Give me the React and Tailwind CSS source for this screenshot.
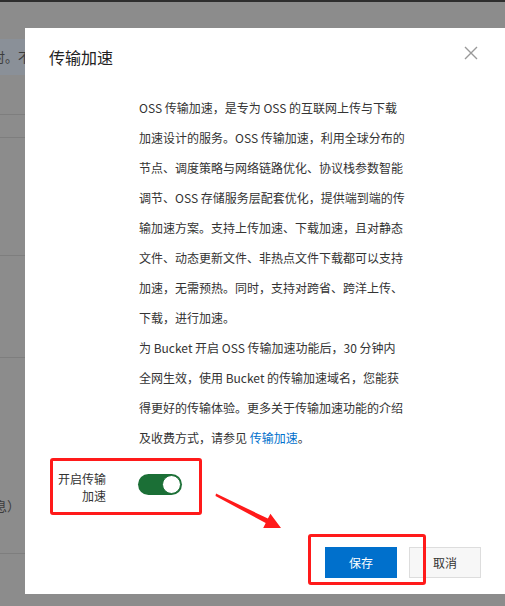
import { useState } from "react";

const font = { fontFamily: '"Noto Sans CJK SC", "Noto Sans", sans-serif' };

const para1 = [
  "OSS 传输加速，是专为 OSS 的互联网上传与下载",
  "加速设计的服务。OSS 传输加速，利用全球分布的",
  "节点、调度策略与网络链路优化、协议栈参数智能",
  "调节、OSS 存储服务层配套优化，提供端到端的传",
  "输加速方案。支持上传加速、下载加速，且对静态",
  "文件、动态更新文件、非热点文件下载都可以支持",
  "加速，无需预热。同时，支持对跨省、跨洋上传、",
  "下载，进行加速。",
];

const para2 = [
  "为 Bucket 开启 OSS 传输加速功能后，30 分钟内",
  "全网生效，使用 Bucket 的传输加速域名，您能获",
  "得更好的传输体验。更多关于传输加速功能的介绍",
];

function Toggle({ on, onChange }) {
  return (
    <button
      onClick={() => onChange(!on)}
      className={`flex items-center w-[44px] h-[21px] rounded-full px-[1px] ${on ? "bg-[#1b6f36] justify-end" : "bg-[#ccc] justify-start"}`}
    >
      <span className="block w-[19px] h-[19px] rounded-full bg-white border border-[#1b6f36]" />
    </button>
  );
}

function App() {
  const [accel, setAccel] = useState(true);

  return (
    <div className="relative w-full h-screen overflow-hidden bg-[#8c8c8c] text-[12px] text-[#333]" style={font}>
      {/* 背景页面（被遮罩） */}
      <div className="h-[2px] bg-[#2e2e2e]" />
      <div className="h-[37px]" />
      <div className="h-[36px] bg-[#8a9098] flex items-center text-[13px] text-[#3c3c3c]">
        <span className="ml-[-8px]">时。不</span>
      </div>
      <div className="h-[40px] border-b border-[#7e7e7e]" />
      <div className="h-[23px] border-b border-[#7e7e7e]" />
      <div className="h-[118px] border-b border-[#7e7e7e]" />
      <div className="h-[102px] border-b border-[#7e7e7e]" />
      <div className="h-[196px] pt-[139px] border-b border-[#7e7e7e]">
        <div className="flex items-center h-[18px] text-[13px] text-[#3c3c3c]">
          <span className="ml-[-6px]">息）</span>
          <span className="ml-[8px] w-[10px] h-[10px] rounded-full bg-[#666]" />
        </div>
      </div>

      {/* 弹窗 */}
      <div className="absolute left-[25px] top-[28px] w-[480px] h-[566px] bg-white flex flex-col">
        <div className="flex items-start justify-between pt-[19px] pl-[24px] pr-[27px]">
          <h2 className="text-[16px] leading-[20px] text-[#222]">传输加速</h2>
          <button className="mt-[-1px] text-[#999]">
            <svg width="14" height="14" viewBox="0 0 14 14" fill="none" stroke="currentColor" strokeWidth="1.4">
              <path d="M1 1L13 13M13 1L1 13" />
            </svg>
          </button>
        </div>

        <div className="mt-[26px] pl-[114px] leading-[30px] text-[12px] text-[#333]">
          {para1.map((l) => (
            <div key={l} className="whitespace-nowrap">{l}</div>
          ))}
          {para2.map((l) => (
            <div key={l} className="whitespace-nowrap">{l}</div>
          ))}
          <div className="whitespace-nowrap">
            及收费方式，请参见 <a className="text-[#0070cc]" href="#">传输加速</a>。
          </div>
        </div>

        <div className="mt-[5px] ml-[25px] w-[152px] h-[57px] border-[3px] border-[#ff1a1a] rounded-[3px] flex items-center pl-[5px]">
          <div className="w-[48px] text-right leading-[17px] text-[#333]">
            开启传输
            <br />
            加速
          </div>
          <div className="ml-[32px] mt-[-4px]">
            <Toggle on={accel} onChange={setAccel} />
          </div>
        </div>

        <div className="relative mt-auto mb-[16px] flex justify-end gap-[12px] pr-[24px]">
          <button className="w-[72px] h-[31px] bg-[#0070cc] text-white text-[12px]">保存</button>
          <button className="w-[72px] h-[31px] bg-[#f7f7f7] border border-[#ddd] text-[#333] text-[12px]">取消</button>
          <div className="absolute left-[283px] top-[-13px] w-[118px] h-[51px] border-[3px] border-[#ff1a1a] rounded-[3px] pointer-events-none" />
        </div>
      </div>

      {/* 标注箭头 */}
      <svg className="absolute left-0 top-0 pointer-events-none" width="505" height="606">
        <polygon
          fill="#ff1a1a"
          points="216,493.5 267.9,518.6 270.4,513.7 281,528 263.2,527.9 265.7,523 215.5,496"
        />
      </svg>
    </div>
  );
}

export default App;
